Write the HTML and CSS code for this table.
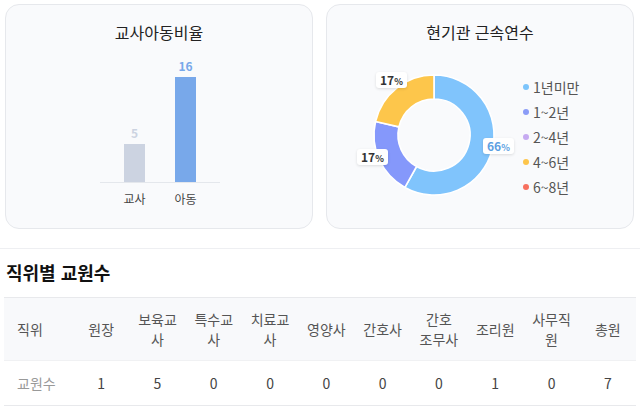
FILE: index.html
```html
<!DOCTYPE html>
<html lang="ko">
<head>
<meta charset="utf-8">
<link rel="stylesheet" href="styles.css">
</head>
<body>
<div class="page">
  <div class="cards">
    <section class="card">
      <h2 class="card-title">교사아동비율</h2>
      <div class="bars">
        <div class="plot">
          <div class="bar-col">
            <span class="bar-val teacher">5</span>
            <div class="bar teacher" style="height:38px"></div>
          </div>
          <div class="bar-col">
            <span class="bar-val child">16</span>
            <div class="bar child" style="height:105px"></div>
          </div>
        </div>
        <div class="cats"><span>교사</span><span>아동</span></div>
      </div>
    </section>
    <section class="card">
      <h2 class="card-title">현기관 근속연수</h2>
      <div class="donut-body">
        <div class="donut">
          <svg width="150" height="130" viewBox="0 0 150 130">
            <path class="seg" fill="#80c4fc" d="M75,5 A60,60 0 1 1 45.91,117.48 L57.55,96.49 A36,36 0 1 0 75,29 Z"/>
            <path class="seg" fill="#8598fb" d="M45.91,117.48 A60,60 0 0 1 16.54,51.5 L39.92,56.9 A36,36 0 0 0 57.55,96.49 Z"/>
            <path class="seg" fill="#fdc64b" d="M16.54,51.5 A60,60 0 0 1 75,5 L75,29 A36,36 0 0 0 39.92,56.9 Z"/>
          </svg>
          <span class="pct pct-top">17<small>%</small></span>
          <span class="pct pct-left">17<small>%</small></span>
          <span class="pct pct-right">66<small>%</small></span>
        </div>
        <ul class="legend">
          <li><i class="dot" style="background:#7cc4fb"></i>1년미만</li>
          <li><i class="dot" style="background:#8b9cf7"></i>1~2년</li>
          <li><i class="dot" style="background:#c6aaf1"></i>2~4년</li>
          <li><i class="dot" style="background:#fdc54b"></i>4~6년</li>
          <li><i class="dot" style="background:#f7705f"></i>6~8년</li>
        </ul>
      </div>
    </section>
  </div>
  <hr class="divider">
  <h3 class="section-title">직위별 교원수</h3>
  <table class="staff">
    <colgroup>
      <col class="c-first">
      <col><col><col><col><col><col><col><col><col><col>
    </colgroup>
    <thead>
      <tr>
        <th class="first">직위</th>
        <th>원장</th>
        <th>보육교사</th>
        <th>특수교사</th>
        <th>치료교사</th>
        <th>영양사</th>
        <th>간호사</th>
        <th>간호<br>조무사</th>
        <th>조리원</th>
        <th>사무직원</th>
        <th>총원</th>
      </tr>
    </thead>
    <tbody>
      <tr>
        <td class="first label">교원수</td>
        <td>1</td><td>5</td><td>0</td><td>0</td><td>0</td><td>0</td><td>0</td><td>1</td><td>0</td><td>7</td>
      </tr>
    </tbody>
  </table>
</div>
</body>
</html>
```
FILE: styles.css
```css
* { box-sizing: border-box; }
html, body {
  margin: 0;
  padding: 0;
  background: #ffffff;
}
body {
  font-family: "Noto Sans CJK KR", "Noto Sans", sans-serif;
  color: #333;
  width: 640px;
  height: 410px;
  overflow: hidden;
}
.page { padding-top: 4px; }
.cards {
  display: grid;
  grid-template-columns: 308px 308px;
  column-gap: 13px;
  padding-left: 5px;
}
.card {
  height: 225px;
  border: 1px solid #e6e8ec;
  border-radius: 14px;
  background: #f9fafc;
  padding-top: 17px;
}
.card-title {
  margin: 0;
  font-size: 16px;
  line-height: 20px;
  font-weight: 400;
  text-align: center;
  color: #222;
}
.bars {
  width: 120px;
  margin: 0 auto;
  position: relative;
  left: 1px;
}
.plot {
  height: 141px;
  border-bottom: 1px solid #e4e7ec;
  display: flex;
  justify-content: center;
  align-items: flex-end;
  gap: 30px;
}
.bar-col {
  width: 21px;
  display: flex;
  flex-direction: column;
  align-items: center;
}
.bar-val {
  font-size: 12px;
  line-height: 14px;
  font-weight: 700;
  margin-bottom: 4px;
}
.bar-val.teacher { color: #ccd3e1; }
.bar-val.child { color: #78a8ea; }
.bar { width: 21px; }
.bar.teacher { background: #ccd3e1; }
.bar.child { background: #78a8ea; }
.cats {
  display: flex;
  justify-content: center;
  gap: 27px;
  margin-top: 8px;
  font-size: 12px;
  line-height: 16px;
  color: #444;
}
.cats span { width: 24px; text-align: center; white-space: nowrap; }

.donut-body {
  display: flex;
  align-items: flex-start;
  margin-top: 28px;
  padding-left: 32px;
}
.donut {
  position: relative;
  width: 150px;
  height: 130px;
  flex: none;
}
.donut svg { display: block; }
.seg { stroke: #ffffff; stroke-width: 1.6; stroke-linejoin: round; }
.pct {
  position: absolute;
  height: 16px;
  line-height: 16px;
  padding: 0 4px;
  background: #ffffff;
  border-radius: 3px;
  box-shadow: 0 1px 3px rgba(0,0,0,0.12);
  font-size: 12px;
  font-weight: 700;
  color: #333;
  white-space: nowrap;
}
.pct small { font-size: 9px; font-weight: 700; }
.pct-top { left: 17px; top: 2px; }
.pct-left { left: -2px; top: 79px; }
.pct-right { left: 124px; top: 68px; color: #5d9fe2; }
.legend {
  list-style: none;
  margin: 4px 0 0 14px;
  padding: 0;
  font-size: 14px;
  color: #555;
}
.legend li {
  height: 25px;
  display: flex;
  align-items: center;
  gap: 4px;
}
.dot {
  width: 6px;
  height: 6px;
  border-radius: 50%;
  display: inline-block;
}

.divider {
  margin: 19px 0 0;
  border: 0;
  border-top: 1px solid #eeeff2;
  height: 0;
}
.section-title {
  margin: 11px 0 0;
  padding-left: 6px;
  font-size: 18px;
  line-height: 24px;
  font-weight: 700;
  color: #111;
}
.staff {
  margin: 13px 4px 0;
  width: 632px;
  table-layout: fixed;
  border-collapse: collapse;
  font-size: 14px;
}
.staff col.c-first { width: 69px; }
.staff thead tr {
  background: #f8f9fb;
  border-top: 1px solid #e8e9ec;
  border-bottom: 1px solid #f0f1f3;
}
.staff th {
  font-weight: 400;
  color: #555;
  line-height: 20px;
  padding: 11px 6px;
  text-align: center;
  vertical-align: middle;
}
.staff td {
  line-height: 20px;
  padding: 12px 6px;
  text-align: center;
  color: #444;
  border-bottom: 1px solid #e8e9ec;
}
.staff .first { text-align: left; padding-left: 13px; }
.staff td.label { color: #999; }
```
